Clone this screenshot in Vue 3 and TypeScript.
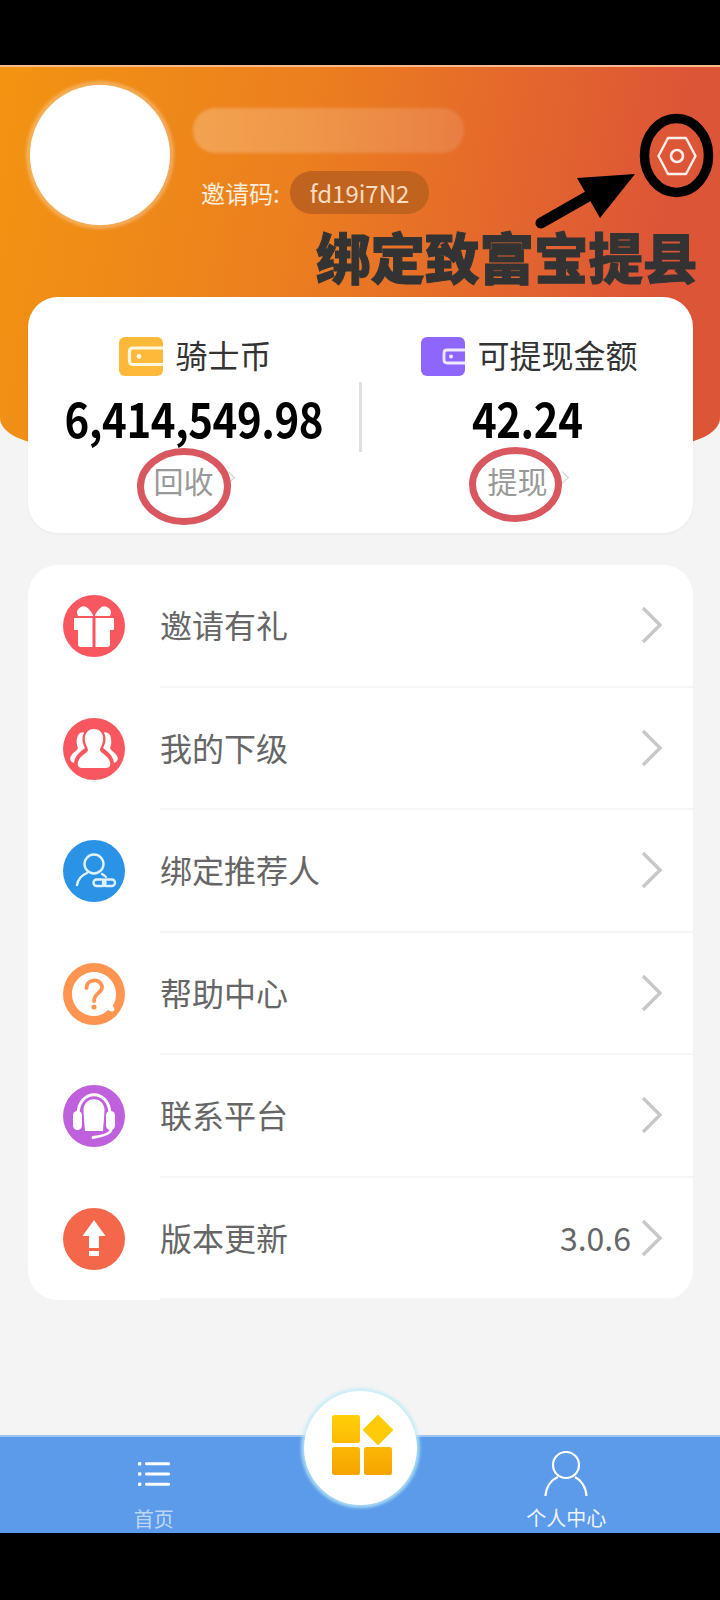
<script setup lang="ts">
interface MenuItem {
  label: string
  color: string
  icon: string
  extra?: string
}

const menu: MenuItem[] = [
  { label: '邀请有礼', color: '#f9575f', icon: 'gift' },
  { label: '我的下级', color: '#f9575f', icon: 'team' },
  { label: '绑定推荐人', color: '#2a93e6', icon: 'bind' },
  { label: '帮助中心', color: '#ff9550', icon: 'help' },
  { label: '联系平台', color: '#bf60dc', icon: 'service' },
  { label: '版本更新', color: '#f5674a', icon: 'update', extra: '3.0.6' }
]
</script>

<template>
  <div class="screen">
    <div class="status"></div>

    <main class="page">
      <header class="hero">
        <div class="avatar"></div>
        <div class="who">
          <div class="name-blur"></div>
          <div class="invite">
            <span class="invite-label">邀请码:</span>
            <span class="invite-code">fd19i7N2</span>
          </div>
        </div>
        <svg class="gear" viewBox="0 0 40 40" width="40" height="40">
          <path d="M11 2 H29 L38.5 20 L29 38 H11 L1.5 20 Z" fill="none" stroke="#fff" stroke-width="2.4" stroke-linejoin="round" opacity=".9" />
          <circle cx="20" cy="20" r="6" fill="none" stroke="#fff" stroke-width="2.6" opacity=".9" />
        </svg>
      </header>

      <section class="wallet">
        <div class="wallet-col">
          <div class="wallet-title">
            <svg class="wallet-icon" viewBox="0 0 44 39" width="44" height="39">
              <rect width="44" height="39" rx="6" fill="#ffb93a" />
              <path d="M44 11 H14 Q10.5 11 10.5 14.5 V24 Q10.5 27.5 14 27.5 H44" fill="none" stroke="#fff6df" stroke-width="3.2" />
              <circle cx="20" cy="19.5" r="2.4" fill="#fff6df" />
            </svg>
            <span>骑士币</span>
          </div>
          <div class="amount">6,414,549.98</div>
          <div class="wallet-link">回收<i class="tiny-arrow"></i></div>
        </div>
        <div class="wallet-line"></div>
        <div class="wallet-col">
          <div class="wallet-title">
            <svg class="wallet-icon" viewBox="0 0 44 39" width="44" height="39">
              <rect width="44" height="39" rx="6" fill="#8f66fb" />
              <path d="M44 13 H26 Q23 13 23 16 V23 Q23 26 26 26 H44" fill="none" stroke="#efe8ff" stroke-width="2.8" />
              <circle cx="30" cy="19.5" r="2" fill="#efe8ff" />
            </svg>
            <span>可提现金额</span>
          </div>
          <div class="amount">42.24</div>
          <div class="wallet-link">提现<i class="tiny-arrow"></i></div>
        </div>
      </section>

      <section class="menu">
        <div v-for="item in menu" :key="item.label" class="row">
          <div class="row-icon" :style="{ background: item.color }">
            <svg viewBox="0 0 62 62" width="62" height="62">
              <g v-if="item.icon === 'gift'" fill="#fff">
                <path d="M30 21 H15 Q12 15 18 12 Q24 9 30 20 Z" />
                <path d="M32 21 H47 Q50 15 44 12 Q38 9 32 20 Z" />
                <path d="M11 23 H29.5 V52 H18 Q15 52 15 49 V35 H12 Q11 35 11 34 Z" />
                <path d="M51 23 H32.5 V52 H44 Q47 52 47 49 V35 H50 Q51 35 51 34 Z" />
              </g>
              <g v-else-if="item.icon === 'team'" fill="#fff">
                <path d="M31 11 C38 11 41 17 40 23 C39 28 37 30 37 32 C37 35 45 37 47 44 C48 48 46 50 43 50 H19 C16 50 14 48 15 44 C17 37 25 35 25 32 C25 30 23 28 22 23 C21 17 24 11 31 11 Z" />
                <path d="M17 15 C19 14 21 14 21 15 C18 20 20 27 22 30 C18 33 12 37 11 45 C8 44 6 41 8 38 C10 34 14 33 15 30 C13 26 13 18 17 15 Z" />
                <path d="M45 15 C43 14 41 14 41 15 C44 20 42 27 40 30 C44 33 50 37 51 45 C54 44 56 41 54 38 C52 34 48 33 47 30 C49 26 49 18 45 15 Z" />
              </g>
              <g v-else-if="item.icon === 'bind'" fill="none" stroke="#dff1ff" stroke-width="2.4" stroke-linecap="round">
                <circle cx="31" cy="24" r="9.5" />
                <path d="M14 45 C15 39 19 35 24 33 M39 34 C41 35 42 36 43 37" />
                <rect x="30.5" y="39.5" width="12" height="6.5" rx="3.2" />
                <rect x="40" y="39.5" width="12" height="6.5" rx="3.2" />
              </g>
              <g v-else-if="item.icon === 'help'">
                <path d="M31 9 C43 9 53 19 53 31 C53 36 52 40 49.5 43 C51 44 52 46 51 48 C49 49 47 48 45 47 C41 51 36 53 31 53 C19 53 9 43 9 31 C9 19 19 9 31 9 Z" fill="#fff" />
                <path d="M23.5 25 C23.5 15 39 15 39 24.5 C39 30 31 30 31 38" fill="none" stroke="#ff9550" stroke-width="3.8" stroke-linecap="round" />
                <circle cx="31" cy="44" r="2.6" fill="#ff9550" />
              </g>
              <g v-else-if="item.icon === 'service'">
                <path d="M15 30 C15 3 47 3 47 30" fill="none" stroke="#fff" stroke-width="3" />
                <rect x="10" y="26" width="9" height="19" rx="4.5" fill="#fff" />
                <rect x="43" y="26" width="9" height="19" rx="4.5" fill="#fff" />
                <path d="M20.5 24 C22 11 40 11 41.5 24 C41.5 30 40.5 38 40 46 H22 C21.5 38 20.5 30 20.5 24 Z" fill="#fff" />
                <path d="M48 45 C47 49 40 51 30 52.5" fill="none" stroke="#fff" stroke-width="2.8" stroke-linecap="round" />
              </g>
              <g v-else fill="#fff">
                <path d="M31 12 L42.5 28 H36 V40 H26 V28 H19.5 Z" />
                <rect x="26" y="43" width="10" height="5" />
              </g>
            </svg>
          </div>
          <div class="row-body">
            <span class="row-label">{{ item.label }}</span>
            <span v-if="item.extra" class="row-extra">{{ item.extra }}</span>
            <svg class="chevron" viewBox="0 0 22 38" width="22" height="38">
              <path d="M2 2 L19 19 L2 36" fill="none" stroke="#c8c8c8" stroke-width="3.4" />
            </svg>
          </div>
        </div>
      </section>
    </main>

    <nav class="tabs">
      <div class="tab tab-home">
        <svg viewBox="0 0 32 24" width="32" height="24">
          <g fill="#fff">
            <rect x="0" y="0" width="3.4" height="3.6" rx="1.2" />
            <rect x="0" y="10.2" width="3.4" height="3.6" rx="1.2" />
            <rect x="0" y="20.4" width="3.4" height="3.6" rx="1.2" />
            <rect x="7" y="0.3" width="25" height="3" rx="1.2" />
            <rect x="7" y="10.5" width="25" height="3" rx="1.2" />
            <rect x="7" y="20.7" width="25" height="3" rx="1.2" />
          </g>
        </svg>
        <span>首页</span>
      </div>
      <div class="tab-center">
        <svg viewBox="0 0 62 62" width="62" height="62">
          <defs>
            <linearGradient id="tileTop" x1="0" y1="0" x2="0" y2="1">
              <stop offset="0" stop-color="#ffcf08" />
              <stop offset="1" stop-color="#fdbb04" />
            </linearGradient>
            <linearGradient id="tileLow" x1="0" y1="0" x2="0" y2="1">
              <stop offset="0" stop-color="#fbb704" />
              <stop offset="1" stop-color="#f5a400" />
            </linearGradient>
          </defs>
          <rect x="0" y="0" width="28" height="28" rx="2.5" fill="url(#tileTop)" />
          <path d="M46 1 L60 15 L46 29 L32 15 Z" fill="#ffcb08" stroke="#ffcb08" stroke-width="2" stroke-linejoin="round" />
          <rect x="0" y="32" width="28" height="28" rx="2.5" fill="url(#tileLow)" />
          <rect x="32" y="32" width="28" height="28" rx="2.5" fill="url(#tileLow)" />
        </svg>
      </div>
      <div class="tab tab-me">
        <svg viewBox="0 0 44 46" width="44" height="46">
          <ellipse cx="22" cy="14" rx="13" ry="13" fill="none" stroke="#fff" stroke-width="2.2" />
          <path d="M1.5 45 C2 36 7 29 14 26 M31 26 C37 29 42 36 42.5 45" fill="none" stroke="#fff" stroke-width="2.2" />
        </svg>
        <span>个人中心</span>
      </div>
    </nav>

    <div class="status status-bottom"></div>

    <!-- painted notes lying over the screenshot -->
    <div class="notes">
      <svg class="notes-svg" viewBox="0 0 720 1600" width="720" height="1600">
        <ellipse cx="676.5" cy="155.5" rx="32" ry="37" fill="none" stroke="#000" stroke-width="9.5" />
        <path d="M541 223 L592 194" stroke="#000" stroke-width="11" stroke-linecap="round" />
        <path d="M635 174 L577 178 L600 218 Z" fill="#000" />
        <ellipse cx="184" cy="486.5" rx="43.5" ry="35" fill="none" stroke="#d9575f" stroke-width="7" />
        <ellipse cx="515.5" cy="484.5" rx="43" ry="34" fill="none" stroke="#d9575f" stroke-width="7" />
      </svg>
      <div class="notes-text">绑定致富宝提县</div>
    </div>
  </div>
</template>

<style>
body {
  margin: 0;
  background: #000;
}
</style>

<style scoped>
.screen {
  position: relative;
  width: 720px;
  height: 1600px;
  display: flex;
  flex-direction: column;
  overflow: hidden;
  background: #000;
  font-family: "Noto Sans CJK SC", "Noto Sans", sans-serif;
}

.status {
  height: 65px;
  flex: none;
  background: #000;
}

.status-bottom {
  height: 67px;
}

.page {
  flex: 1;
  background: #f4f4f4;
  min-height: 0;
}

.hero {
  height: 381px;
  box-sizing: border-box;
  padding: 18px 22px 0 30px;
  display: flex;
  align-items: flex-start;
  background: linear-gradient(100deg, #f29412 0%, #ec7f1f 40%, #dd5537 88%);
  border-top: 2px solid #f6b98c;
  border-radius: 0 0 60px 60px / 0 0 28px 28px;
}

.avatar {
  width: 140px;
  height: 140px;
  flex: none;
  border-radius: 50%;
  background: #fff;
  box-shadow: 0 0 3px 4px rgba(255, 255, 255, 0.28);
}

.who {
  width: 271px;
  margin-left: 23px;
  padding-top: 23px;
}

.name-blur {
  height: 45px;
  border-radius: 22px;
  background: linear-gradient(90deg, rgba(255, 255, 255, 0.24), rgba(255, 255, 255, 0.12));
  filter: blur(1.5px);
}

.invite {
  display: flex;
  align-items: center;
  margin-top: 18px;
  margin-left: 8px;
  white-space: nowrap;
}

.invite-label {
  font-size: 24px;
  color: #fdeedd;
  width: 89px;
}

.invite-code {
  width: 139px;
  height: 43px;
  line-height: 43px;
  text-align: center;
  border-radius: 22px;
  background: #c0631f;
  color: #fbdcc0;
  font-size: 24px;
}

.gear {
  margin-left: auto;
  margin-top: 51px;
  margin-right: 1px;
  flex: none;
}

.wallet {
  position: relative;
  margin: -149px 27px 0 28px;
  height: 236px;
  box-sizing: border-box;
  padding-top: 40px;
  display: flex;
  background: #fff;
  border-radius: 30px;
  box-shadow: 0 1px 3px rgba(0, 0, 0, 0.05);
}

.wallet-col {
  flex: 1;
  display: flex;
  flex-direction: column;
  align-items: center;
}

.wallet-line {
  width: 3px;
  height: 70px;
  margin-top: 45px;
  background: #e0e0e0;
  flex: none;
}

.wallet-title {
  display: flex;
  align-items: center;
  gap: 12px;
  height: 39px;
  padding-left: 4px;
  font-size: 32px;
  color: #333;
  white-space: nowrap;
}

.wallet-title span {
  margin-bottom: 5px;
}

.wallet-icon {
  flex: none;
}

.amount {
  margin-top: 8px;
  height: 66px;
  line-height: 66px;
  font-size: 48px;
  font-weight: 700;
  letter-spacing: -0.5px;
  color: #000;
  white-space: nowrap;
  transform: scaleX(0.875);
}

.wallet-link {
  position: relative;
  margin-top: 8px;
  padding-right: 20px;
  height: 44px;
  line-height: 44px;
  font-size: 30px;
  color: #999;
}

.tiny-arrow {
  position: absolute;
  left: calc(100% - 10px);
  top: 15px;
  width: 8px;
  height: 8px;
  border-top: 1.5px solid #ccc;
  border-right: 1.5px solid #ccc;
  transform: rotate(45deg);
}

.menu {
  margin: 32px 27px 0 28px;
  height: 735px;
  background: #fff;
  border-radius: 30px;
  overflow: hidden;
}

.row {
  height: 122.5px;
  display: flex;
  align-items: center;
  padding-left: 35px;
}

.row-icon {
  width: 62px;
  height: 62px;
  flex: none;
  border-radius: 50%;
  margin-right: 35px;
}

.row-icon svg {
  display: block;
}

.row-body {
  flex: 1;
  height: 100%;
  display: flex;
  align-items: center;
  box-sizing: border-box;
  border-bottom: 2px solid #f5f5f5;
  padding-right: 30px;
}

.row-label {
  flex: 1;
  font-size: 32px;
  color: #666;
  padding-bottom: 2px;
}

.row-extra {
  font-size: 32px;
  color: #666;
  margin-right: 10px;
  padding-bottom: 2px;
}

.chevron {
  flex: none;
}

.tabs {
  position: relative;
  height: 98px;
  flex: none;
  display: flex;
  background: #5b9bea;
  border-top: 2px solid #9cc4f3;
  box-sizing: border-box;
}

.tab {
  flex: 1;
  display: flex;
  flex-direction: column;
  align-items: center;
  font-size: 20px;
}

.tab span {
  line-height: 24px;
}

.tab-home {
  color: rgba(255, 255, 255, 0.62);
  padding-top: 25px;
  margin-right: 50px;
  padding-right: 5px;
}

.tab-home span {
  margin-top: 21px;
}

.tab-me {
  color: rgba(255, 255, 255, 0.92);
  padding-top: 14px;
  margin-left: 50px;
}

.tab-me span {
  margin-top: 9px;
}

.tab-center {
  position: absolute;
  left: 304px;
  top: -46px;
  width: 113px;
  height: 114px;
  display: flex;
  align-items: center;
  justify-content: center;
  border-radius: 50%;
  background: #fff;
  box-shadow: 0 0 3px 3px rgba(190, 235, 245, 0.75);
}

.tab-center svg {
  margin-left: 4px;
  margin-bottom: 4px;
}

.notes {
  position: absolute;
  inset: 0;
  pointer-events: none;
}

.notes-svg {
  position: absolute;
  left: 0;
  top: 0;
}

.notes-text {
  position: absolute;
  left: 316px;
  top: 220px;
  font-size: 54.5px;
  line-height: 72px;
  font-weight: 900;
  color: #333;
  white-space: nowrap;
  -webkit-text-stroke: 1px #333;
}
</style>
